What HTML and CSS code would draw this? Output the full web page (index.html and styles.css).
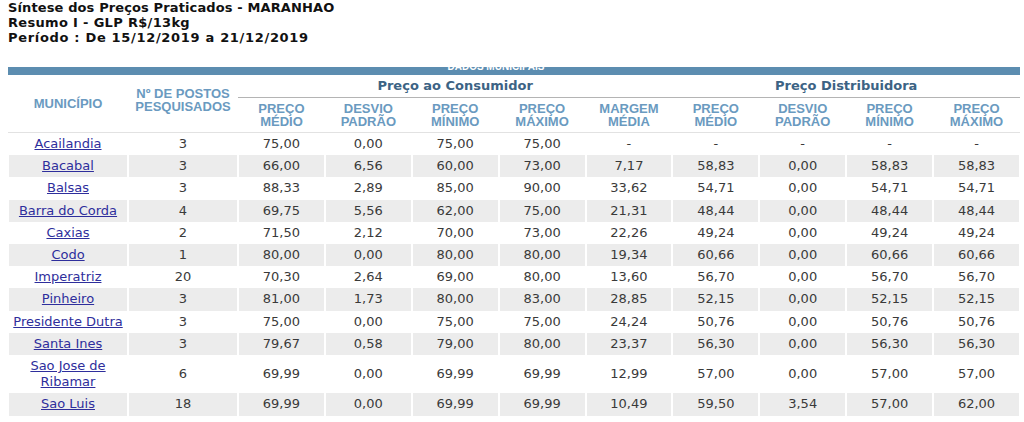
FILE: index.html
```html
<!DOCTYPE html>
<html lang="pt-BR">
<head>
<meta charset="utf-8">
<title>Síntese dos Preços Praticados - MARANHAO</title>
<link rel="stylesheet" href="styles.css">
</head>
<body>
<div class="title">
  <div class="t1">Síntese dos Preços Praticados - MARANHAO</div>
  <div class="t2">Resumo I - GLP R$/13kg</div>
  <div class="t3">Período : De 15/12/2019 a 21/12/2019</div>
</div>
<div class="bar"><span class="bar-text">DADOS MUNICIPAIS</span></div>
<table class="grid">
  <colgroup>
    <col class="c-mun"><col class="c-pos">
    <col><col><col><col><col><col><col><col><col>
  </colgroup>
  <thead>
    <tr class="grp">
      <th rowspan="2" class="h-side">MUNICÍPIO</th>
      <th rowspan="2" class="h-side h-pos">Nº DE POSTOS<br>PESQUISADOS</th>
      <th colspan="5" class="h-group">Preço ao Consumidor</th>
      <th colspan="4" class="h-group">Preço Distribuidora</th>
    </tr>
    <tr class="sub">
      <th>PREÇO<br>MÉDIO</th>
      <th>DESVIO<br>PADRÃO</th>
      <th>PREÇO<br>MÍNIMO</th>
      <th>PREÇO<br>MÁXIMO</th>
      <th>MARGEM<br>MÉDIA</th>
      <th>PREÇO<br>MÉDIO</th>
      <th>DESVIO<br>PADRÃO</th>
      <th>PREÇO<br>MÍNIMO</th>
      <th>PREÇO<br>MÁXIMO</th>
    </tr>
  </thead>
  <tbody>
    <tr><td><a href="#">Acailandia</a></td><td>3</td><td>75,00</td><td>0,00</td><td>75,00</td><td>75,00</td><td>-</td><td>-</td><td>-</td><td>-</td><td>-</td></tr>
    <tr><td><a href="#">Bacabal</a></td><td>3</td><td>66,00</td><td>6,56</td><td>60,00</td><td>73,00</td><td>7,17</td><td>58,83</td><td>0,00</td><td>58,83</td><td>58,83</td></tr>
    <tr><td><a href="#">Balsas</a></td><td>3</td><td>88,33</td><td>2,89</td><td>85,00</td><td>90,00</td><td>33,62</td><td>54,71</td><td>0,00</td><td>54,71</td><td>54,71</td></tr>
    <tr><td><a href="#">Barra do Corda</a></td><td>4</td><td>69,75</td><td>5,56</td><td>62,00</td><td>75,00</td><td>21,31</td><td>48,44</td><td>0,00</td><td>48,44</td><td>48,44</td></tr>
    <tr><td><a href="#">Caxias</a></td><td>2</td><td>71,50</td><td>2,12</td><td>70,00</td><td>73,00</td><td>22,26</td><td>49,24</td><td>0,00</td><td>49,24</td><td>49,24</td></tr>
    <tr><td><a href="#">Codo</a></td><td>1</td><td>80,00</td><td>0,00</td><td>80,00</td><td>80,00</td><td>19,34</td><td>60,66</td><td>0,00</td><td>60,66</td><td>60,66</td></tr>
    <tr><td><a href="#">Imperatriz</a></td><td>20</td><td>70,30</td><td>2,64</td><td>69,00</td><td>80,00</td><td>13,60</td><td>56,70</td><td>0,00</td><td>56,70</td><td>56,70</td></tr>
    <tr><td><a href="#">Pinheiro</a></td><td>3</td><td>81,00</td><td>1,73</td><td>80,00</td><td>83,00</td><td>28,85</td><td>52,15</td><td>0,00</td><td>52,15</td><td>52,15</td></tr>
    <tr><td><a href="#">Presidente Dutra</a></td><td>3</td><td>75,00</td><td>0,00</td><td>75,00</td><td>75,00</td><td>24,24</td><td>50,76</td><td>0,00</td><td>50,76</td><td>50,76</td></tr>
    <tr><td><a href="#">Santa Ines</a></td><td>3</td><td>79,67</td><td>0,58</td><td>79,00</td><td>80,00</td><td>23,37</td><td>56,30</td><td>0,00</td><td>56,30</td><td>56,30</td></tr>
    <tr><td><a href="#">Sao Jose de Ribamar</a></td><td>6</td><td>69,99</td><td>0,00</td><td>69,99</td><td>69,99</td><td>12,99</td><td>57,00</td><td>0,00</td><td>57,00</td><td>57,00</td></tr>
    <tr><td><a href="#">Sao Luis</a></td><td>18</td><td>69,99</td><td>0,00</td><td>69,99</td><td>69,99</td><td>10,49</td><td>59,50</td><td>3,54</td><td>57,00</td><td>62,00</td></tr>
  </tbody>
</table>
</body>
</html>
```
FILE: styles.css
```css
html, body {
  margin: 0;
  padding: 0;
  background: #fff;
}
body {
  padding: 0 4px 0 8px;
  font-family: "DejaVu Sans", Verdana, sans-serif;
}
.title {
  font-family: "DejaVu Sans", Verdana, sans-serif;
  font-weight: bold;
  font-size: 13px;
  line-height: 15px;
  color: #111;
  margin-bottom: 22px;
}
.t1 { letter-spacing: 0.12px; }
.t2 { letter-spacing: 0.32px; }
.t3 { letter-spacing: 0.68px; }
.bar {
  height: 8px;
  background: #5c8db0;
  overflow: hidden;
  padding-right: 36px;
  text-align: center;
}
.bar-text {
  display: block;
  margin-top: -5px;
  font-family: "Liberation Sans", Arial, sans-serif;
  font-weight: bold;
  font-size: 10px;
  line-height: 10px;
  color: #fff;
}
.grid {
  width: 1012px;
  table-layout: fixed;
  border-collapse: separate;
  border-spacing: 0;
}
.c-mun { width: 120px; }
.c-pos { width: 110px; }
.grid th {
  font-family: "Liberation Sans", Arial, sans-serif;
  font-weight: bold;
  font-size: 13px;
  line-height: 13px;
  color: #6a9ac0;
  text-align: center;
  padding: 4px 1px;
  border-bottom: 1px solid #e2e2e2;
}
.grid th.h-side {
  vertical-align: middle;
}
.grid th.h-pos {
  padding-bottom: 12px;
}
.grid th.h-group {
  font-family: "DejaVu Sans", Verdana, sans-serif;
  font-size: 13px;
  line-height: 16px;
  color: #3c6384;
  padding: 3px 1px;
  border-bottom: 1px solid #b4b4b4;
}
.grid td {
  font-size: 13px;
  line-height: 16.2px;
  color: #3a3a3a;
  text-align: center;
  vertical-align: middle;
  padding: 3px 1px;
  border-left: 1px solid #fff;
  border-right: 1px solid #fff;
}
.grid tbody tr:nth-child(even) td {
  background: #ececec;
}
.grid a {
  color: #2e2e9c;
  text-decoration: underline;
}
```
